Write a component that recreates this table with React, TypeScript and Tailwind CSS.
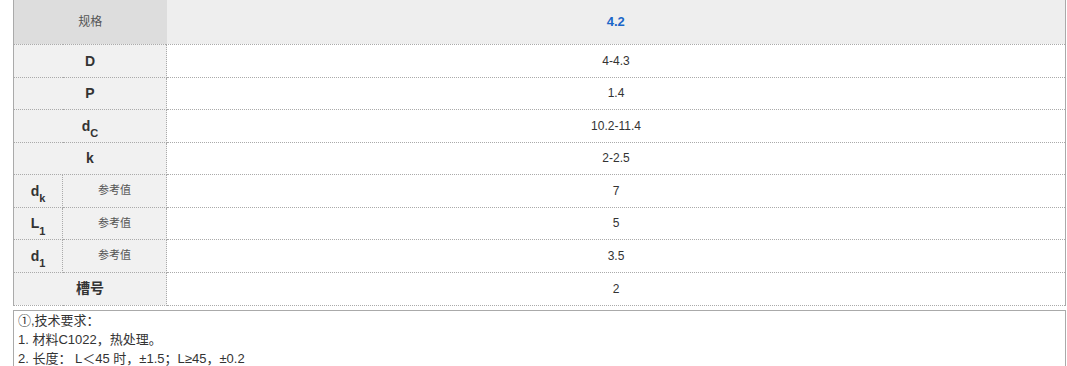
const rows = [
  { label: "D", sub: "", value: "4-4.3" },
  { label: "P", sub: "", value: "1.4" },
  { label: "d", sub: "C", value: "10.2-11.4" },
  { label: "k", sub: "", value: "2-2.5" },
];

const refRows = [
  { label: "d", sub: "k", value: "7" },
  { label: "L", sub: "1", value: "5" },
  { label: "d", sub: "1", value: "3.5" },
];

const dot = "border-dotted border-[#aaa]";

function Label({ label, sub }: { label: string; sub: string }) {
  return (
    <span className="font-bold text-[14px] text-[#333]">
      {label}
      {sub && <sub className="text-[11px] align-[-4px] leading-none">{sub}</sub>}
    </span>
  );
}

export default function App() {
  return (
    <div
      className="w-[1067px] h-[366px] overflow-hidden bg-white pl-[13px] pr-[1px]"
      style={{ fontFamily: '"Liberation Sans", Arial, "Noto Sans CJK SC", sans-serif' }}
    >
      <table className="w-full table-fixed border-collapse border-x border-solid border-[#aaa] text-center">
        <colgroup>
          <col className="w-[49px]" />
          <col className="w-[104px]" />
          <col />
        </colgroup>
        <tbody>
          {/* header */}
          <tr className="h-[44px]">
            <td colSpan={2} className="bg-[#ddd] text-[12px] text-[#555]">
              规格
            </td>
            <td className={`bg-[#eee] text-[13px] font-bold text-[#1a66c8] border-b ${dot}`}>4.2</td>
          </tr>

          {rows.map((r, i) => (
            <tr key={i} className={i % 2 === 0 ? "h-[33px]" : "h-[32px]"}>
              <td colSpan={2} className={`bg-[#f1f1f1] border ${dot} border-l-0`}>
                <Label label={r.label} sub={r.sub} />
              </td>
              <td className={`text-[12px] text-[#333] border ${dot} border-r-0`}>{r.value}</td>
            </tr>
          ))}

          {refRows.map((r, i) => (
            <tr key={i} className={i % 2 === 0 ? "h-[33px]" : "h-[32px]"}>
              <td className={`bg-[#f1f1f1] border ${dot} border-l-0`}>
                <Label label={r.label} sub={r.sub} />
              </td>
              <td className={`bg-[#f1f1f1] text-[11px] text-[#555] border ${dot}`}>参考值</td>
              <td className={`text-[12px] text-[#333] border ${dot} border-r-0`}>{r.value}</td>
            </tr>
          ))}

          <tr className="h-[33px]">
            <td colSpan={2} className={`bg-[#f1f1f1] font-bold text-[14px] text-[#333] border ${dot} border-l-0`}>
              槽号
            </td>
            <td className={`text-[12px] text-[#333] border ${dot} border-r-0`}>2</td>
          </tr>
        </tbody>
      </table>

      <div className="mt-[4px] border border-[#aaa] px-[4px] text-[13px] leading-[19px] text-[#333]">
        <p>①,技术要求：</p>
        <p>1. 材料C1022，热处理。</p>
        <p>2. 长度： L＜45 时，±1.5；L≥45，±0.2</p>
      </div>
    </div>
  );
}
